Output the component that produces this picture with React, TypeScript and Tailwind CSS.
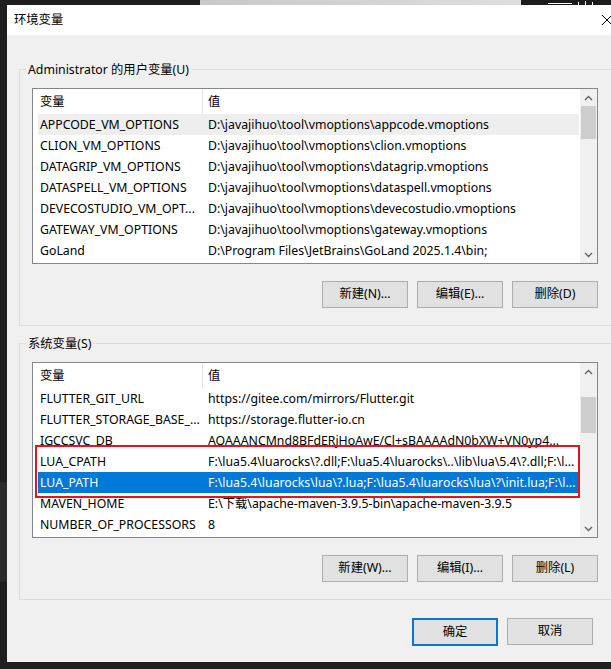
import React from "react";

const userRows: [string, string][] = [
  ["APPCODE_VM_OPTIONS", "D:\\javajihuo\\tool\\vmoptions\\appcode.vmoptions"],
  ["CLION_VM_OPTIONS", "D:\\javajihuo\\tool\\vmoptions\\clion.vmoptions"],
  ["DATAGRIP_VM_OPTIONS", "D:\\javajihuo\\tool\\vmoptions\\datagrip.vmoptions"],
  ["DATASPELL_VM_OPTIONS", "D:\\javajihuo\\tool\\vmoptions\\dataspell.vmoptions"],
  ["DEVECOSTUDIO_VM_OPT...", "D:\\javajihuo\\tool\\vmoptions\\devecostudio.vmoptions"],
  ["GATEWAY_VM_OPTIONS", "D:\\javajihuo\\tool\\vmoptions\\gateway.vmoptions"],
  ["GoLand", "D:\\Program Files\\JetBrains\\GoLand 2025.1.4\\bin;"],
];

const systemRows: [string, string][] = [
  ["FLUTTER_GIT_URL", "https://gitee.com/mirrors/Flutter.git"],
  ["FLUTTER_STORAGE_BASE_...", "https://storage.flutter-io.cn"],
  ["IGCCSVC_DB", "AQAAANCMnd8BFdERjHoAwE/Cl+sBAAAAdN0bXW+VN0yp4..."],
  ["LUA_CPATH", "F:\\lua5.4\\luarocks\\?.dll;F:\\lua5.4\\luarocks\\..\\lib\\lua\\5.4\\?.dll;F:\\l..."],
  ["LUA_PATH", "F:\\lua5.4\\luarocks\\lua\\?.lua;F:\\lua5.4\\luarocks\\lua\\?\\init.lua;F:\\l..."],
  ["MAVEN_HOME", "E:\\下载\\apache-maven-3.9.5-bin\\apache-maven-3.9.5"],
  ["NUMBER_OF_PROCESSORS", "8"],
];

function Chevron({ up }: { up?: boolean }) {
  return (
    <svg width="9" height="6" viewBox="0 0 9 6">
      <polyline
        points={up ? "1,5 4.5,1.5 8,5" : "1,1 4.5,4.5 8,1"}
        fill="none"
        stroke="#606060"
        strokeWidth="1.3"
      />
    </svg>
  );
}

function ScrollBar({ gap, thumb }: { gap: string; thumb: string }) {
  return (
    <div className="flex w-[17px] shrink-0 flex-col bg-[#f0f0f0]">
      <div className="flex h-[17px] items-center justify-center">
        <Chevron up />
      </div>
      <div className={gap} />
      <div className={`${thumb} mx-[1px] bg-[#cdcdcd]`} />
      <div className="flex-1" />
      <div className="flex h-[17px] items-center justify-center">
        <Chevron />
      </div>
    </div>
  );
}

function ListView({
  rows,
  gap,
  thumb,
  hover,
  selected,
  children,
}: {
  rows: [string, string][];
  gap: string;
  thumb: string;
  hover?: number;
  selected?: number;
  children?: React.ReactNode;
}) {
  return (
    <div className="relative flex h-[176px] border border-[#828790] bg-white">
      <div className="flex flex-1 flex-col overflow-hidden pl-[5px] pr-[1px]">
        <div className="flex h-[25px] shrink-0 items-center">
          <div className="w-[164px] pl-[2px] pt-[1px]">变量</div>
          <div className="h-full w-px bg-[#e5e5e5]" />
          <div className="pl-[5px] pt-[1px]">值</div>
        </div>
        {rows.map(([name, value], i) => (
          <div
            key={name}
            className={`flex h-[21px] shrink-0 items-center whitespace-nowrap pt-[2px] ${
              i === selected
                ? "bg-[#0078d7] text-white"
                : i === hover
                  ? "bg-[#eeeeee]"
                  : ""
            }`}
          >
            <div className="w-[164px] shrink-0 overflow-hidden pl-[2px]">{name}</div>
            <div className="flex-1 overflow-hidden pl-[6px]">{value}</div>
          </div>
        ))}
      </div>
      <ScrollBar gap={gap} thumb={thumb} />
      {children}
    </div>
  );
}

function WinButton({ label, focused }: { label: string; focused?: boolean }) {
  return (
    <button
      className={`flex h-[27px] w-[86px] items-center justify-center bg-[#e1e1e1] ${
        focused ? "h-[28px] border-2 border-[#0078d7]" : "border border-[#adadad]"
      }`}
    >
      {label}
    </button>
  );
}

function GroupBox({ title, children }: { title: string; children: React.ReactNode }) {
  return (
    <div className="relative w-[594px] border border-[#dcdcdc] pb-[17px] pl-[12px] pr-[14px] pt-[18px]">
      <span className="absolute left-[6px] top-0 -translate-y-1/2 bg-[#f0f0f0] px-[2px] leading-[16px]">
        {title}
      </span>
      {children}
    </div>
  );
}

export default function App() {
  return (
    <div className="h-[669px] w-[611px] overflow-hidden bg-[#202020] text-[12.3px] text-black font-['Noto_Sans','Noto_Sans_CJK_SC',sans-serif]">
      {/* background strip above the dialog */}
      <div className="flex h-[5px]">
        <div className="w-[200px] bg-[#1e1e1e]" />
        <div className="w-[321px] bg-gradient-to-r from-[#c8c8c8] to-[#dedede]" />
        <div className="flex flex-1 items-end gap-[6px] bg-[#1c1c1c] pl-[27px]">
          <div className="mb-[1px] h-px w-[24px] bg-white" />
          <div className="h-[3px] w-px bg-white" />
          <div className="h-[4px] w-px bg-white" />
          <div className="h-[3px] w-px bg-white" />
        </div>
      </div>

      <div className="flex h-[657px]">
        <div className="flex w-[7px] shrink-0 flex-col">
          <div className="h-[477px] bg-[#1f1f1f]" />
          <div className="h-[100px] bg-[#2a2a2a]" />
          <div className="flex-1 bg-[#1f1f1f]" />
        </div>

        <div className="flex w-[623px] shrink-0 flex-col bg-[#f0f0f0]">
          <div className="flex h-[30px] items-center bg-white">
            <span className="flex-1 pl-[7px]">环境变量</span>
            <div className="flex h-full w-[46px] items-center justify-center">
              <svg width="10" height="10" viewBox="0 0 10 10">
                <path d="M0 0L10 10M10 0L0 10" stroke="#000" strokeWidth="1" />
              </svg>
            </div>
          </div>

          <div className="flex flex-col pl-[12px] pt-[34px]">
            <GroupBox title="Administrator 的用户变量(U)">
              <ListView rows={userRows} gap="h-0" thumb="h-[33px]" hover={0} />
              <div className="mt-[17px] flex justify-end gap-[9px]">
                <WinButton label="新建(N)..." />
                <WinButton label="编辑(E)..." />
                <WinButton label="删除(D)" />
              </div>
            </GroupBox>

            <div className="mt-[17px]">
              <GroupBox title="系统变量(S)">
                <ListView rows={systemRows} gap="h-[17px]" thumb="h-[36px]" selected={4}>
                  {/* red annotation box */}
                  <div className="absolute left-[2px] top-[82px] h-[53px] w-[545px] border-2 border-[#e81123]" />
                </ListView>
                <div className="mt-[17px] flex justify-end gap-[9px]">
                  <WinButton label="新建(W)..." />
                  <WinButton label="编辑(I)..." />
                  <WinButton label="删除(L)" />
                </div>
              </GroupBox>
            </div>
          </div>

          <div className="mt-[18px] flex justify-end gap-[9px] pr-[37px]">
            <WinButton label="确定" focused />
            <WinButton label="取消" />
          </div>
        </div>
      </div>
    </div>
  );
}
